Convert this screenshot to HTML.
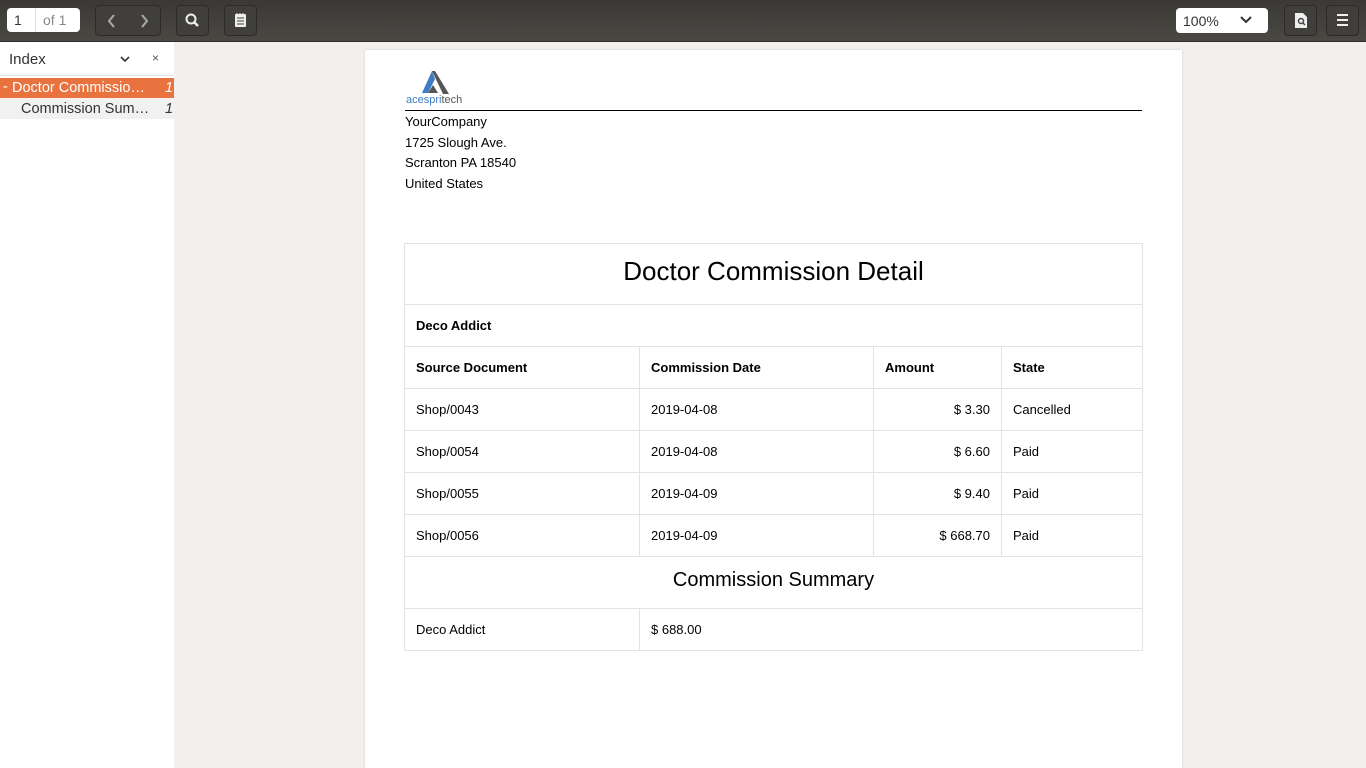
<!DOCTYPE html>
<html><head><style>
body{margin:0;width:1366px;height:768px;overflow:hidden;background:#f1f0ee;font-family:"Liberation Sans",sans-serif;position:relative}
.tb{position:absolute;left:0;top:0;width:1366px;height:41px;background:linear-gradient(#3a3935,#4a4843);border-bottom:1px solid #2e2d2a}
.btn{position:absolute;top:5px;height:31px;border:1px solid #2c2b28;border-radius:4px;background:#403f3b;box-sizing:border-box}
.side{position:absolute;left:0;top:42px;width:174px;height:726px;background:#fff}
.page{position:absolute;left:365px;top:50px;width:817px;height:718px;background:#fff;box-shadow:0 0 2px #ccc}
.a{position:absolute;font-size:13px;color:#000}
table{position:absolute;left:404px;top:243px;width:739px;border-collapse:collapse;font-size:13px}
td{border:1px solid #e3e3e3;padding:0 11px;height:41px}
th{border:1px solid #e3e3e3;padding:0 11px;height:41px;text-align:left}
.r{text-align:right}
</style></head><body>
<div class="tb">
<div style="position:absolute;left:7px;top:8px;width:73px;height:24px;background:#fff;border-radius:4px;font-size:14px"><span style="position:absolute;left:7px;top:4px;color:#333">1</span><div style="position:absolute;left:28px;top:0;width:1px;height:24px;background:#ddd"></div><span style="position:absolute;left:36px;top:4px;color:#888">of 1</span></div>
<div class="btn" style="left:95px;width:66px"><svg width="66" height="28"><path d="M18 9l-5 6 5 6M46 9l5 6-5 6" stroke="#aaa" stroke-width="2" fill="none"/></svg></div>
<div class="btn" style="left:176px;width:33px"><svg width="31" height="28"><circle cx="14" cy="13" r="4.5" stroke="#eee" stroke-width="2" fill="none"/><path d="M17 16l4 4" stroke="#eee" stroke-width="2.5"/></svg></div>
<div class="btn" style="left:224px;width:33px"><svg width="31" height="28"><rect x="10" y="8" width="11" height="13" rx="1" fill="#eee"/><path d="M12 12h7M12 15h7M12 18h7" stroke="#444"/><path d="M12 7v2M15 7v2M18 7v2" stroke="#eee"/></svg></div>
<div style="position:absolute;left:1176px;top:8px;width:92px;height:25px;background:#fff;border-radius:4px;font-size:14px;color:#333"><span style="position:absolute;left:7px;top:5px">100%</span><svg style="position:absolute;left:63px;top:6px" width="14" height="12"><path d="M2 3l5 5 5-5" stroke="#333" stroke-width="2" fill="none"/></svg></div>
<div class="btn" style="left:1284px;width:33px"><svg width="31" height="28"><path d="M10 7h8l4 4v11H10z" fill="#eee"/><circle cx="16" cy="15" r="2.5" stroke="#444" stroke-width="1.5" fill="none"/><path d="M18 17l2 2" stroke="#444" stroke-width="1.5"/></svg></div>
<div class="btn" style="left:1326px;width:33px"><svg width="31" height="28"><path d="M10 9h11M10 14h11M10 19h11" stroke="#eee" stroke-width="2"/></svg></div>
</div>
<div class="side">
<div style="position:absolute;left:9px;top:9px;font-size:15px;color:#333">Index</div>
<svg style="position:absolute;left:119px;top:12px" width="12" height="10"><path d="M2 3l4 4 4-4" stroke="#333" stroke-width="1.6" fill="none"/></svg>
<div style="position:absolute;left:152px;top:9px;font-size:12px;color:#555">×</div>
<div style="position:absolute;left:0;top:33px;width:174px;height:1px;background:#e5e5e5"></div>
<div style="position:absolute;left:0;top:36px;width:174px;height:20px;background:#e9733f;color:#fff;font-size:14.5px"><span style="position:absolute;left:3px;top:1px">-</span><span style="position:absolute;left:12px;top:2px">Doctor Commissio…</span><span style="position:absolute;left:165px;top:2px;font-style:italic">1</span></div>
<div style="position:absolute;left:0;top:56px;width:174px;height:21px;background:#f1f1f1;color:#333;font-size:14.5px"><span style="position:absolute;left:21px;top:3px">Commission Sum…</span><span style="position:absolute;left:165px;top:3px;font-style:italic">1</span></div>
</div>
<div class="page"></div>
<svg style="position:absolute;left:418px;top:69px" width="34" height="26"><path d="M14 2L4 24h6l7-14z" fill="#3d7cc4"/><path d="M14 2h3l14 23h-6zM10 24l5-8 5 8z" fill="#555"/></svg>
<div class="a" style="left:406px;top:94px;font-size:11px;color:#3d7cc4">acespri<span style="color:#555">tech</span></div>
<div style="position:absolute;left:405px;top:110px;width:737px;height:1px;background:#000"></div>
<div class="a" style="left:405px;top:112px;line-height:20.5px">YourCompany<br>1725 Slough Ave.<br>Scranton PA 18540<br>United States</div>
<table>
<tr><td colspan="4" style="height:61px;text-align:center;font-size:26px;padding-bottom:6px;box-sizing:border-box">Doctor Commission Detail</td></tr>
<tr><th colspan="4">Deco Addict</th></tr>
<tr><th style="width:212px">Source Document</th><th style="width:211px">Commission Date</th><th style="width:105px">Amount</th><th>State</th></tr>
<tr><td>Shop/0043</td><td>2019-04-08</td><td class="r">$ 3.30</td><td>Cancelled</td></tr>
<tr><td>Shop/0054</td><td>2019-04-08</td><td class="r">$ 6.60</td><td>Paid</td></tr>
<tr><td>Shop/0055</td><td>2019-04-09</td><td class="r">$ 9.40</td><td>Paid</td></tr>
<tr><td>Shop/0056</td><td>2019-04-09</td><td class="r">$ 668.70</td><td>Paid</td></tr>
<tr><td colspan="4" style="height:52px;text-align:center;font-size:20px;padding-bottom:4px;box-sizing:border-box">Commission Summary</td></tr>
<tr><td>Deco Addict</td><td colspan="3">$ 688.00</td></tr>
</table>
</body></html>
